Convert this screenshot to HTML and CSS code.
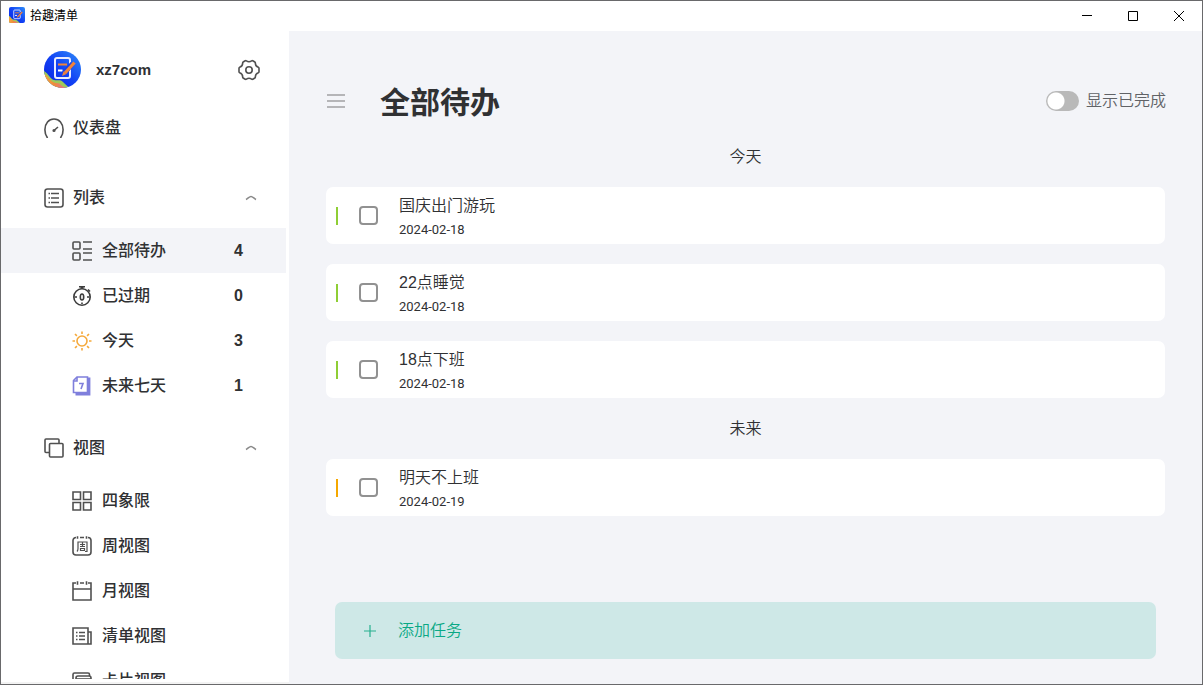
FILE: index.html
```html
<!DOCTYPE html>
<html lang="zh-CN">
<head>
<meta charset="utf-8">
<meta name="viewport" content="width=device-width, initial-scale=1">
<title>拾趣清单</title>
<link rel="stylesheet" href="styles.css">
</head>
<body>
<svg class="defs" aria-hidden="true">
  <defs>
    <linearGradient id="blue" x1="0" y1="1" x2="1" y2="0"><stop offset="0" stop-color="#0b1fe0"/><stop offset=".5" stop-color="#1243f5"/><stop offset="1" stop-color="#2f8df8"/></linearGradient>
    <linearGradient id="wave" x1="0" y1="0" x2="1" y2="0"><stop offset="0" stop-color="#f6a53a"/><stop offset=".45" stop-color="#f08a3c"/><stop offset="1" stop-color="#e06aa8"/></linearGradient>
    <clipPath id="round"><circle cx="18.5" cy="18.5" r="18.5"/></clipPath>
    <g id="logo-art">
      <rect width="37" height="37" fill="url(#blue)"/>
      <path d="M0 20c5 3 6 8 10 9s6-1 9 2 5 4 6 6H0z" fill="#9cc95a"/>
      <path d="M0 23c4 1 5 6 9 8s5 0 8 3 4 2 6 3H0z" fill="url(#wave)"/>
      <rect x="11" y="7" width="15" height="20" rx="2" fill="none" stroke="#e9ecff" stroke-width="2"/>
      <path d="M14 13.500h9" stroke="#f0843a" stroke-width="2.200"/>
      <path d="M14 19.500h4.500" stroke="#fff" stroke-width="2.200"/>
      <path d="M28.500 12.500 20 22.500" stroke="#1a3fe8" stroke-width="5"/>
      <path d="M30.500 11.500 21 22" stroke="#f0843a" stroke-width="3.200"/>
      <path d="m19.500 20.500 3 2.500-4.500 2z" fill="#f0843a"/>
    </g>
  </defs>
</svg>
<div class="window">
  <header class="titlebar">
    <svg class="app-icon" viewBox="0 0 37 37"><use href="#logo-art"/></svg>
    <span class="app-name">拾趣清单</span>
    <div class="window-buttons">
      <button class="window-button" aria-label="最小化"><svg viewBox="0 0 12 12"><path d="M1 5.500h10"/></svg></button>
      <button class="window-button" aria-label="最大化"><svg viewBox="0 0 12 12"><path d="M1.500 1.500h9v9h-9z"/></svg></button>
      <button class="window-button" aria-label="关闭"><svg viewBox="0 0 12 12"><path d="m1 1 10 10M11 1 1 11"/></svg></button>
    </div>
  </header>
  <div class="body">
    <aside class="sidebar">
      <div class="user">
        <svg class="avatar" viewBox="0 0 37 37"><g clip-path="url(#round)"><use href="#logo-art"/></g></svg>
        <span class="user-name">xz7com</span>
        <button class="settings" aria-label="设置"><svg class="icon settings-icon" viewBox="0 0 22 22"><path d="M7.200 1.800q.6-.4 1.200.1 2.600 1.700 5.200 0 .6-.5 1.200-.1l2 1.200q.6.3.5 1 0 3.200 3 4.300.7.300.7 1v3.400q0 .7-.7 1-3 1.100-3 4.300.1.700-.5 1l-2 1.200q-.6.400-1.200-.1-2.600-1.700-5.200 0-.6.500-1.200.1l-2-1.200q-.6-.3-.5-1 0-3.200-3-4.300-.7-.3-.7-1V9.300q0-.7.700-1 3-1.100 3-4.300-.1-.7.500-1z"/><circle cx="11" cy="11" r="3.200"/></svg></button>
      </div>
      <nav class="nav">
        <a class="nav-top" href="#"><svg class="icon" viewBox="0 0 20 20"><path d="M3.600 20C1.800 18 .9 15 .9 11.800.9 5.300 4.800 1 10 1s9.100 4.300 9.100 10.800c0 3.200-.9 6.200-2.700 8.200M14 9l-4 3.500"/><circle cx="10" cy="12.500" r=".8"/></svg>仪表盘</a>
        <section class="group">
          <button class="nav-top" aria-expanded="true"><svg class="icon" viewBox="0 0 20 20"><rect x="1" y="1" width="18" height="18" rx="2.500"/><path d="M7 5.500h8M7 10h8M7 14.500h8M4.500 5.500H6M4.500 10H6M4.500 14.500H6"/></svg>列表<svg class="chevron" viewBox="0 0 12 6"><path d="M1 4.500C3 3.500 4.500 1.500 6 1.500S9 3.500 11 4.500"/></svg></button>
          <a class="nav-item active" href="#" aria-current="page"><svg class="icon" viewBox="0 0 20 20"><rect x="1" y="1" width="7" height="7" rx="1"/><rect x="1" y="12" width="7" height="7" rx="1"/><path d="M11 1h9M11 8h9M11 12h9M11 19h9"/></svg>全部待办<span class="count">4</span></a>
          <a class="nav-item" href="#"><svg class="icon timer" viewBox="0 0 20 20"><circle cx="10" cy="11" r="8.200"/><path d="M7 .8h6M8.500 2h3M16 3.500l2 2M2.500 11H5M15 11h2.500M10 18v-1.500"/><ellipse cx="10" cy="11" rx="1.700" ry="3"/></svg>已过期<span class="count">0</span></a>
          <a class="nav-item" href="#"><svg class="icon sun" viewBox="0 0 20 20"><circle cx="10" cy="10" r="5"/><path d="M10 .5v2.500M10 17v2.500M.5 10H3M17 10h2.500M3 3l1.900 1.900M15.100 15.100 17 17M3 17l1.900-1.900M15.100 4.900 17 3"/></svg>今天<span class="count">3</span></a>
          <a class="nav-item" href="#"><svg class="icon seven" viewBox="0 0 20 20"><path d="M5 1h10.500v15.500H1.500V4.500z"/><path d="M1.500 5H5V1"/><path class="thick" d="M17.200 1.500v16.700H3.500"/><path d="M7 7.500h4L9 13"/></svg>未来七天<span class="count">1</span></a>
        </section>
        <section class="group">
          <button class="nav-top" aria-expanded="true"><svg class="icon" viewBox="0 0 20 20"><rect x="5.500" y="5.500" width="13.500" height="13.500" rx="1"/><path d="M5.500 14.500H2a1 1 0 0 1-1-1V2a1 1 0 0 1 1-1h12a1 1 0 0 1 1 1v3"/></svg>视图<svg class="chevron" viewBox="0 0 12 6"><path d="M1 4.500C3 3.500 4.500 1.500 6 1.500S9 3.500 11 4.500"/></svg></button>
          <a class="nav-item" href="#"><svg class="icon" viewBox="0 0 20 20"><path d="M1 1h7.500v7.500H1zM11.500 1H19v7.500h-7.500zM1 11.500h7.500V19H1zM11.500 11.500H19V19h-7.500z"/></svg>四象限</a>
          <a class="nav-item" href="#"><svg class="icon" viewBox="0 0 20 20"><path d="M4 1.500a3 3 0 0 0-3 3V16a3 3 0 0 0 3 3h12a3 3 0 0 0 3-3V4.500a3 3 0 0 0-3-3M8 1.500h4M5.500.3v2.500M14.500.3v2.500"/><path class="fine" d="M5 15.500q1-1 1-3V6h9v9.500h-2M8 8.500h5M10.500 6.500v4M8 10.500h5M8.500 12.500h4v2h-4z"/></svg>周视图</a>
          <a class="nav-item" href="#"><svg class="icon" viewBox="0 0 20 20"><path d="M4 2H1v17h18V2h-3M8 2h4M1 8h18M5.500.3v3.500M14.500.3v3.500"/></svg>月视图</a>
          <a class="nav-item" href="#"><svg class="icon" viewBox="0 0 20 20"><path d="M1 2h15v16H1zM16 6h3v12h-4M7 6.500h6M7 10h6M7 13.500h6M4 6.500h1.500M4 10h1.500M4 13.500h1.500"/></svg>清单视图</a>
          <a class="nav-item" href="#"><svg class="icon" viewBox="0 0 20 20"><path d="M1 14V3.500A1.500 1.500 0 0 1 2.500 2H16a1.500 1.500 0 0 1 1.500 1.500V5"/><rect x="4" y="5" width="15" height="13" rx="2"/><path d="M4 8h15"/></svg>卡片视图</a>
        </section>
      </nav>
    </aside>
    <main class="main">
      <header class="main-header">
        <button class="menu" aria-label="菜单"><svg viewBox="0 0 20 16"><path d="M1 2h18M1 8h18M1 14h18"/></svg></button>
        <h1 class="title">全部待办</h1>
        <label class="toggle"><input class="switch" type="checkbox" role="switch">显示已完成</label>
      </header>
      <h2 class="section-title">今天</h2>
      <ul class="tasks">
        <li><label class="task"><span class="mark"></span><input class="check" type="checkbox"><span class="task-text">国庆出门游玩<time class="date">2024-02-18</time></span></label></li>
        <li><label class="task"><span class="mark"></span><input class="check" type="checkbox"><span class="task-text">22点睡觉<time class="date">2024-02-18</time></span></label></li>
        <li><label class="task"><span class="mark"></span><input class="check" type="checkbox"><span class="task-text">18点下班<time class="date">2024-02-18</time></span></label></li>
      </ul>
      <h2 class="section-title">未来</h2>
      <ul class="tasks">
        <li><label class="task"><span class="mark mark-orange"></span><input class="check" type="checkbox"><span class="task-text">明天不上班<time class="date">2024-02-19</time></span></label></li>
      </ul>
      <button class="add"><svg class="plus" viewBox="0 0 14 14"><path d="M7 1v12M1 7h12"/></svg>添加任务</button>
    </main>
  </div>
</div>
</body>
</html>
```
FILE: styles.css
```css
* { box-sizing: border-box; }
body {
  margin: 0;
  font: 16px/24px "Liberation Sans", "Noto Sans CJK SC", sans-serif;
  color: #303133;
}
button {
  margin: 0;
  padding: 0;
  border: 0;
  background: none;
  font: inherit;
  color: inherit;
  text-align: left;
}
a { color: inherit; text-decoration: none; }
svg { display: block; flex: none; fill: none; }
.defs { position: absolute; width: 0; height: 0; }

.window {
  display: flex;
  flex-direction: column;
  height: 100vh;
  border: 1px solid #69696b;
  background: #fff;
  overflow: hidden;
}
.titlebar {
  flex: none;
  display: flex;
  align-items: center;
  height: 30px;
  padding-left: 8px;
}
.app-icon { width: 16px; height: 16px; border-radius: 2px; margin-bottom: 2px; }
.app-name { margin-left: 5px; font-size: 12px; color: #000; }
.window-buttons { display: flex; margin-left: auto; }
.window-button {
  display: grid;
  place-items: center;
  width: 46px;
  height: 28px;
}
.window-button svg { width: 12px; height: 12px; stroke: #000; }

.body { flex: 1; display: flex; min-height: 0; }
.sidebar {
  flex: none;
  display: flex;
  flex-direction: column;
  width: 288px;
  padding-bottom: 3px;
  border-bottom: 2px solid #f3f3f3;
  font-weight: 500;
}
.user {
  flex: none;
  display: flex;
  align-items: center;
  height: 77px;
  padding: 0 29px 0 43px;
}
.avatar { width: 37px; height: 37px; }
.user-name { margin-left: 15px; font-size: 15px; font-weight: 700; }
.settings { margin-left: auto; }
.settings .settings-icon { width: 22px; height: 22px; margin: 0; }
.nav { flex: 1; min-height: 0; overflow: hidden; }
.icon {
  width: 20px;
  height: 20px;
  stroke: #505050;
  stroke-width: 1.6;
  margin-right: 10px;
}
.fine { stroke-width: 1.2; }
.thick { stroke-width: 2.4; }
.nav-top {
  display: flex;
  align-items: center;
  width: 100%;
  height: 40px;
  padding: 0 32px 0 43px;
}
.nav-top .icon { margin-right: 9px; }
.group { padding-top: 30px; }
.group .nav-top { margin-bottom: 10px; }
.group + .group { padding-top: 20px; }
.chevron { width: 12px; height: 6px; margin-left: auto; stroke: #8a8a8a; stroke-width: 1.6; }
.nav-item {
  display: flex;
  align-items: center;
  height: 45px;
  margin-right: 3px;
  padding: 0 43px 0 71px;
}
.active { background: #f3f4f8; }
.count { margin-left: auto; font-weight: 700; }
.timer { stroke: #3c3c3c; }
.sun { stroke: #f5a93b; }
.seven { stroke: #7f7fdc; }

.main {
  flex: 1;
  min-width: 0;
  display: flex;
  flex-direction: column;
  padding: 40px 37px 25px;
  background: #f3f4f8;
}
.main-header { display: flex; align-items: center; height: 60px; }
.menu svg { width: 20px; height: 16px; stroke: #b5b5b8; stroke-width: 2; }
.title { margin: 4px 0 0 34px; font-size: 30px; line-height: 40px; }
.toggle {
  display: flex;
  align-items: center;
  gap: 7px;
  margin-left: auto;
  margin-right: -1px;
  font-weight: 350;
  color: #606266;
}
.switch {
  appearance: none;
  width: 33px;
  height: 20px;
  margin: 0;
  border-radius: 10px;
  background: radial-gradient(circle at 10px 10px, #fff 8px, #b9b9b9 9px);
}
.section-title {
  display: grid;
  place-items: center;
  height: 51px;
  margin: 0;
  font-size: 16px;
  font-weight: 350;
}
.tasks {
  display: grid;
  gap: 20px;
  margin: 0;
  padding: 5px 0;
  list-style: none;
}
.task {
  display: flex;
  align-items: center;
  height: 57px;
  padding-left: 10px;
  border-radius: 7px;
  background: #fff;
}
.mark { width: 2px; height: 18px; background: #8fce35; }
.mark-orange { background: #f5a800; }
.check {
  appearance: none;
  width: 19px;
  height: 19px;
  margin: 0 21px;
  border: 2px solid #919191;
  border-radius: 4px;
  background: #fff;
}
.task-text { display: grid; padding-top: 5px; font-weight: 350; }
.date { font-family: Roboto, sans-serif; font-size: 13px; font-weight: 400; }
.add {
  display: flex;
  align-items: center;
  height: 57px;
  margin: auto 9px 0;
  padding-left: 28px;
  border-radius: 7px;
  background: #cee8e7;
  color: #0aa885;
  font-weight: 350;
}
.plus { width: 14px; height: 14px; margin-right: 21px; stroke: #27b08f; stroke-width: 1.2; }
```
